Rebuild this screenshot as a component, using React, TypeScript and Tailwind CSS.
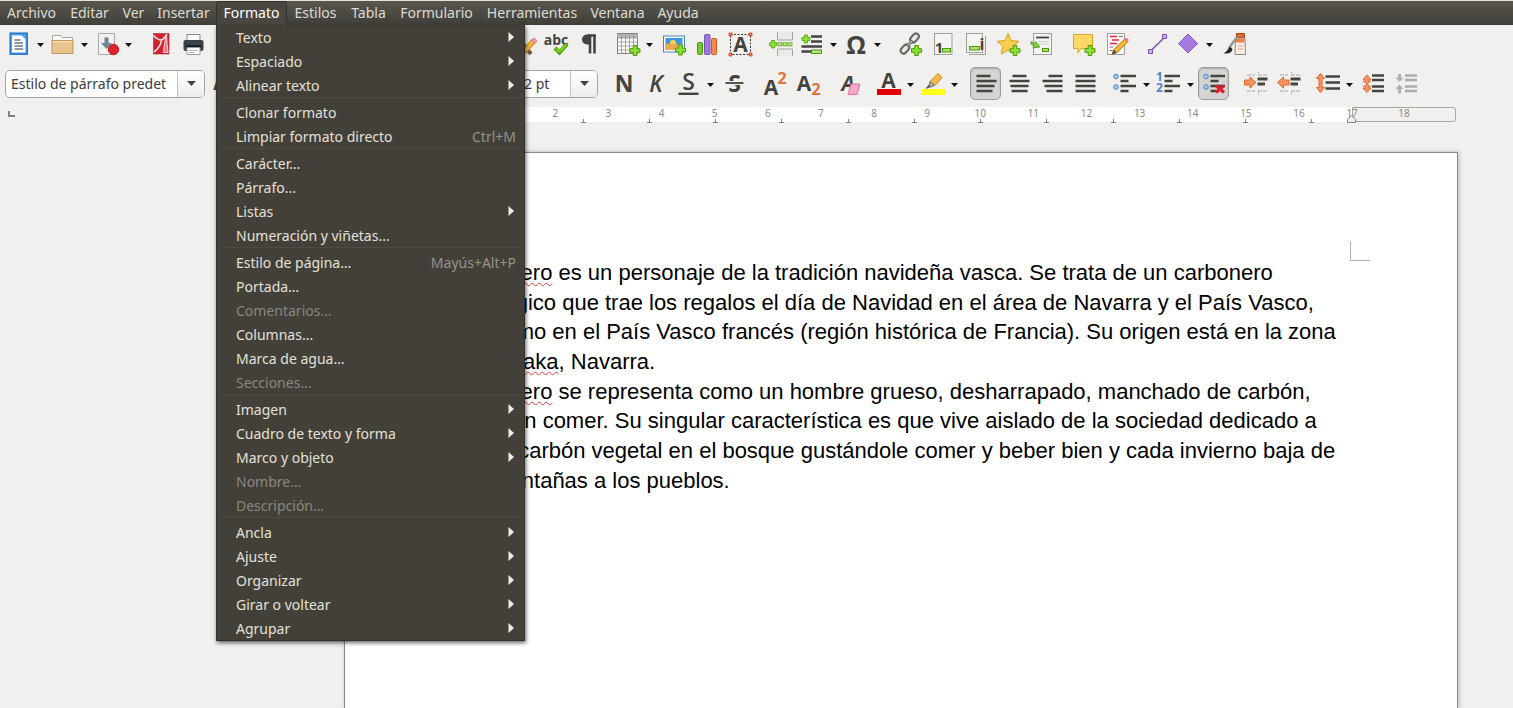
import type { ReactNode } from 'react';

const INK = '#45433f';
const GREEN = '#73d216';

const menus = [
  { label: 'Archivo', width: 'w-[63px]' },
  { label: 'Editar', width: 'w-[53px]' },
  { label: 'Ver', width: 'w-[35px]' },
  { label: 'Insertar', width: 'w-[65px]' },
  { label: 'Formato', width: 'w-[71px]', open: true },
  { label: 'Estilos', width: 'w-[57px]' },
  { label: 'Tabla', width: 'w-[49px]' },
  { label: 'Formulario', width: 'w-[87px]' },
  { label: 'Herramientas', width: 'w-[104px]' },
  { label: 'Ventana', width: 'w-[67px]' },
  { label: 'Ayuda', width: 'w-[54px]' },
];

type Item = { label: string; sub?: boolean; keys?: string; off?: boolean };

const formatMenu: Item[][] = [
  [
    { label: 'Texto', sub: true },
    { label: 'Espaciado', sub: true },
    { label: 'Alinear texto', sub: true },
  ],
  [{ label: 'Clonar formato' }, { label: 'Limpiar formato directo', keys: 'Ctrl+M' }],
  [
    { label: 'Carácter…' },
    { label: 'Párrafo...' },
    { label: 'Listas', sub: true },
    { label: 'Numeración y viñetas...' },
  ],
  [
    { label: 'Estilo de página…', keys: 'Mayús+Alt+P' },
    { label: 'Portada…' },
    { label: 'Comentarios…', off: true },
    { label: 'Columnas...' },
    { label: 'Marca de agua…' },
    { label: 'Secciones...', off: true },
  ],
  [
    { label: 'Imagen', sub: true },
    { label: 'Cuadro de texto y forma', sub: true },
    { label: 'Marco y objeto', sub: true },
    { label: 'Nombre…', off: true },
    { label: 'Descripción…', off: true },
  ],
  [
    { label: 'Ancla', sub: true },
    { label: 'Ajuste', sub: true },
    { label: 'Organizar', sub: true },
    { label: 'Girar o voltear', sub: true },
    { label: 'Agrupar', sub: true },
  ],
];

function Icon({ children }: { children: ReactNode }) {
  return (
    <svg viewBox="0 0 24 24" className="h-6 w-6 shrink-0 overflow-visible" fill="none" aria-hidden="true">
      {children}
    </svg>
  );
}

function Tool({ label, children }: { label: string; children: ReactNode }) {
  return (
    <button type="button" aria-label={label} className="flex h-8 w-[33px] shrink-0 items-center justify-center">
      <Icon>{children}</Icon>
    </button>
  );
}

function Pressed({ label, children }: { label: string; children: ReactNode }) {
  return (
    <button
      type="button"
      aria-label={label}
      aria-pressed="true"
      className="mr-0.5 flex h-[33px] w-[31px] shrink-0 items-center justify-center rounded-[5px] border border-[#a09d99] bg-[#d6d4d2] shadow-[inset_0_1px_2px_rgba(0,0,0,0.2)]"
    >
      <Icon>{children}</Icon>
    </button>
  );
}

function Split({ label, children }: { label: string; children: ReactNode }) {
  return (
    <div className="flex shrink-0 items-center">
      <button type="button" aria-label={label} className="flex h-8 w-[29px] items-center justify-center">
        <Icon>{children}</Icon>
      </button>
      <button type="button" aria-label={`${label}: opciones`} className="flex h-8 w-[15px] items-center justify-center">
        <svg viewBox="0 0 7 4" className="mt-0.5 h-1 w-[7px]" aria-hidden="true">
          <path d="M0 0h7L3.5 4z" fill="#111" />
        </svg>
      </button>
    </div>
  );
}

function Gap() {
  return <div className="w-2 shrink-0" />;
}

function Combo({ label, value, width }: { label: string; value: string; width: string }) {
  return (
    <div className={`flex h-7 shrink-0 overflow-hidden rounded-[5px] border border-[#a8a39d] bg-white ${width}`}>
      <input
        type="text"
        aria-label={label}
        defaultValue={value}
        className="w-0 flex-1 bg-transparent pl-[5px] text-[14px] text-[#3c3c3c] outline-none"
      />
      <button
        type="button"
        aria-label={`${label}: lista`}
        className="flex w-[27px] items-center justify-center border-l border-[#c4c0bb] bg-gradient-to-b from-white to-[#efedeb]"
      >
        <svg viewBox="0 0 9 5" className="h-[5px] w-[9px]" aria-hidden="true">
          <path d="M0 0h9L4.5 5z" fill={INK} />
        </svg>
      </button>
    </div>
  );
}

function Plus({ x, y }: { x: number; y: number }) {
  return (
    <path
      transform={`translate(${x} ${y})`}
      d="M-1.8-5h3.6v3.2H5v3.6H1.8V5h-3.6V1.8H-5v-3.6h3.2z"
      fill="#8ae234"
      stroke="#4e9a06"
      strokeWidth="1"
    />
  );
}

function Glyph({ x, y, size, children, fill = INK, weight = 700, italic = false }: {
  x: number; y: number; size: number; children: ReactNode; fill?: string; weight?: number; italic?: boolean;
}) {
  return (
    <text
      x={x}
      y={y}
      fontSize={size}
      fontWeight={weight}
      fontStyle={italic ? 'italic' : 'normal'}
      fill={fill}
      textAnchor="middle"
      fontFamily='"Open Sans", "Noto Sans", sans-serif'
    >
      {children}
    </text>
  );
}

function Lines({ d }: { d: string }) {
  return <path d={d} stroke={INK} strokeWidth="2.6" />;
}

function StandardBar() {
  return (
    <div className="flex h-[38px] items-center pl-1">
      <Split label="Nuevo">
        <rect x="3.2" y="1.2" width="17" height="21" fill="#4ba3ee" stroke="#1b6fc8" strokeWidth="1.4" />
        <path d="M5 3.5h9.500l4 3.500v13.500h-13.500z" fill="#fff" />
        <path d="M7.500 8h6M7.500 11h8.500M7.500 14h8.500M7.500 17h8.500" stroke="#6a7885" strokeWidth="1.300" />
      </Split>
      <Split label="Abrir">
        <path d="M1.500 9V3.500h8l2 2h10V9" fill="#fbfaf8" stroke="#a9a49c" />
        <rect x="1" y="8.500" width="21" height="13" fill="#e9c58c" stroke="#bd9a63" />
        <path d="M2 9.700h19" stroke="#f7e3c0" />
      </Split>
      <Split label="Guardar">
        <path d="M3.500 1.500h16v21h-16z" fill="#f1f1f0" stroke="#a8a8a6" />
        <path d="M9.500 5.500h4V11h3.500l-5.500 6-5.500-6h3.500z" fill="#6d8594" />
        <circle cx="18.500" cy="17.500" r="5.200" fill="#dc2430" stroke="#bd1622" />
      </Split>
      <Gap />
      <Tool label="Exportar a PDF">
        <rect x="4.500" y="1.500" width="15.500" height="20.500" fill="#cf2230" stroke="#b5202b" strokeWidth=".6" />
        <path d="M4.500 3.500c3 3.500 5.500 4.500 8 4.500 2.500-1 4-3.500 5.500-6M12.500 8c-.5 4.500-3.500 9-7.500 12" stroke="#f6d9da" strokeWidth="1.600" />
        <path d="M17.500 3c-1.500 4-2.500 11-3 17.500h4.500c-.8-6-1.200-12-1.500-17.500z" fill="#e27a80" stroke="#f6d9da" />
      </Tool>
      <Tool label="Imprimir">
        <path d="M5 9V2.500h13V9" fill="#fafafa" stroke="#888" />
        <rect x="1.500" y="8" width="20" height="11" rx="2" fill="#37424a" />
        <path d="M4 14.500h15" stroke="#10161a" strokeWidth="2" />
        <path d="M5 15.500h13v7H5z" fill="#fff" stroke="#999" />
        <path d="M7 18.500h9M7 20.500h6" stroke="#bbb" />
      </Tool>
      <div className="w-[296px] shrink-0" />
      <Tool label="Clonar formato">
        <path d="M6 5l14 17" stroke="#6a5746" strokeWidth="4" />
        <path d="M22.500 9L13 20" stroke="#c98a14" strokeWidth="5.500" />
        <path d="M22.500 9L13 20" stroke="#f5b83b" strokeWidth="3.500" />
        <path d="M20 8l4 3.500 1.500-2c.5-1.500-1.500-3.500-3-3z" fill="#f19ab0" stroke="#c8607b" strokeWidth=".7" />
      </Tool>
      <Tool label="Ortografía">
        <Glyph x={12} y={13} size={14}>abc</Glyph>
        <path d="M11 16l4.500 4.500 7.500-8.500" stroke="#4e9a06" strokeWidth="4" />
        <path d="M11.800 16.800l3.700 3 6.800-7.200" stroke={GREEN} strokeWidth="2.300" />
      </Tool>
      <Tool label="Marcas de formato">
        <path d="M11 3.500h8M13 4v17.500M17.500 4v17.500" stroke={INK} strokeWidth="2.600" />
        <path d="M13 2.500h-3a4.800 4.800 0 0 0 0 10h3z" fill={INK} />
      </Tool>
      <Gap />
      <Split label="Tabla">
        <rect x="1.500" y="1.500" width="20" height="20" fill="#fff" stroke="#81807c" />
        <path d="M1.500 2h20v4h-20z" fill="#b7b6b2" />
        <path d="M1.500 6h20M1.500 10h20M1.500 14h20M1.500 18h20M5.500 1.500v20M9.500 1.500v20M13.500 1.500v20M17.500 1.500v20" stroke="#9a9995" strokeWidth=".9" />
        <Plus x={19} y={18.500} />
      </Split>
      <Tool label="Imagen">
        <rect x="1.500" y="4" width="21" height="16" fill="#fff" stroke="#4982b7" />
        <rect x="3.500" y="6" width="17" height="12" fill="#3c97df" />
        <circle cx="11" cy="11" r="3" fill="#ffd84a" />
        <path d="M3.500 12.500c5-3 9 2 17-1V18h-17z" fill="#eda94f" />
        <Plus x={18.500} y={18} />
      </Tool>
      <Tool label="Gráfico">
        <rect x="2.500" y="10.500" width="5" height="12" rx="1" fill="#73c92f" stroke="#4b9410" />
        <rect x="9.500" y="2.500" width="5.500" height="20" rx="1" fill="#a278dc" stroke="#7950b5" />
        <rect x="16.500" y="6.500" width="5" height="16" rx="1" fill="#f4894d" stroke="#cf5b1e" />
      </Tool>
      <Tool label="Cuadro de texto">
        <rect x="2.500" y="2.500" width="20" height="20" stroke="#383838" strokeDasharray="2 1.500" />
        <Glyph x={12.500} y={20} size={21}>A</Glyph>
        <path d="M1 1h3v3H1zM21 1h3v3h-3zM1 21h3v3H1zM21 21h3v3h-3z" fill="#ee7b54" stroke="#c9481e" strokeWidth=".8" />
      </Tool>
      <Gap />
      <Tool label="Salto de página">
        <path d="M8.500 0v8h15V0M8.500 24v-7h15v7" fill="#eceae8" stroke="#a5a4a1" />
        <path d="M.5 10.800h2V8.500h3v2.300h2v3h-2V16h-3v-2.200h-2z" fill="#8ae234" stroke="#4e9a06" strokeWidth=".8" />
        <path d="M9 10.800h4v3H9zM14 10.800h4v3h-4zM19 10.800h4v3h-4z" fill="#c6f09c" stroke="#4e9a06" strokeWidth=".8" />
      </Tool>
      <Split label="Campo">
        <Lines d="M11 4.500h11M11 9.500h11M1.500 14.500H22M1.500 19.500h10" />
        <path d="M2 5.500h2.500V3h3v2.500H10v3H7.500V11h-3V8.500H2z" fill="#8ae234" stroke="#4e9a06" strokeWidth=".8" />
        <rect x="11.500" y="18" width="10" height="3.500" fill="#b4e87e" stroke="#4e9a06" />
      </Split>
      <Split label="Carácter especial">
        <Glyph x={12} y={21.500} size={25}>Ω</Glyph>
      </Split>
      <Gap />
      <Tool label="Hiperenlace">
        <g stroke="#696863" fill="#e5e4e1">
          <rect x="-5" y="-3" width="10" height="6" rx="3" transform="translate(16.500 6) rotate(-48)" fillOpacity=".3" strokeWidth="2" />
          <rect x="-5" y="-3" width="10" height="6" rx="3" transform="translate(7 17) rotate(-48)" fillOpacity=".3" strokeWidth="2" />
          <path d="M9 14.500l5.500-6" strokeWidth="3" />
          <path d="M9.500 14l4.500-5" stroke="#dddbd8" strokeWidth="1" />
        </g>
        <Plus x={18.500} y={18.500} />
      </Tool>
      <Tool label="Nota al pie">
        <rect x="3.500" y="1.500" width="17.500" height="21" fill="#f4f4f3" stroke="#a09f9c" />
        <Glyph x={8} y={21} size={15}>1</Glyph>
        <rect x="11.500" y="16.500" width="8" height="3.500" fill="#a7e36c" stroke="#4e9a06" />
      </Tool>
      <Tool label="Nota al final">
        <rect x="2.500" y="1.500" width="16" height="19" fill="#f4f4f3" stroke="#a09f9c" />
        <path d="M5 22.500h16.500V4" stroke="#a09f9c" />
        <Glyph x={18} y={18} size={16}>i</Glyph>
        <rect x="5.500" y="14.500" width="10" height="3.500" fill="#a7e36c" stroke="#4e9a06" />
      </Tool>
      <Tool label="Marcador">
        <path d="M11 1.500l3 7 8 .8-6 5 1.700 7.700-6.700-4-6.800 4 1.800-7.700-6-5 8-.8z" fill="#fbce50" stroke="#dda01c" />
        <Plus x={18} y={18.500} />
      </Tool>
      <Tool label="Referencia cruzada">
        <rect x="3.500" y="1.500" width="18" height="21" fill="#f4f4f3" stroke="#a09f9c" />
        <path d="M6 5.500h13" stroke={INK} strokeWidth="1.800" />
        <path d="M8 9.500h11M8 12h11" stroke="#c2c2c0" strokeWidth=".8" />
        <path d="M1 9.500l3.500 2 1-2 4.500 5.500-7 1 1-2-3-2z" fill="#7ac943" stroke="#4e9a06" strokeWidth=".8" />
        <rect x="12.500" y="16.500" width="6" height="3" fill="#a7e36c" stroke="#4e9a06" />
      </Tool>
      <Gap />
      <Tool label="Comentario">
        <path d="M2.500 2.500h19v14H10l-3 4.500v-4.500H2.500z" fill="#fcd865" stroke="#d8a82b" />
        <Plus x={19} y={18.500} />
      </Tool>
      <Tool label="Control de cambios">
        <path d="M3.500 1.500h17v21h-17z" fill="#fafafa" stroke="#a09f9c" />
        <path d="M6 4.500h7M8 8h7M6 11.500h7" stroke="#d92b3a" strokeWidth="1.500" />
        <path d="M15 4.500h4M5.500 15h4M5.500 18.500h3" stroke="#777" />
        <path d="M22 8.500l-11 11" stroke="#b87a10" strokeWidth="5" />
        <path d="M22 8.500l-11 11" stroke="#fbb936" strokeWidth="3.200" />
        <path d="M9.500 17.500l3.500 3.500-5.500 1.800z" fill="#594528" />
        <path d="M20 7l3.500 3.500 1-2c0-2-1.500-2.500-3-2.500z" fill="#f0708c" />
      </Tool>
      <Gap />
      <Tool label="Línea">
        <path d="M5 19.500L20 5" stroke="#74509f" strokeWidth="1.500" />
        <path d="M3.500 17.500h4v4h-4zM17.500 2.500h4v4h-4z" fill="#cdb2ed" stroke="#7950b5" />
      </Tool>
      <Split label="Formas">
        <path d="M12 2l9.500 9.500-9.500 9.500L2.500 11.500z" fill="#a47be0" stroke="#8359c2" />
      </Split>
      <Tool label="Funciones de dibujo">
        <path d="M14.500 1.500h8v4h-8z" fill="#d96d2e" stroke="#a34714" />
        <path d="M13.500 6h9.500l.5 16.500h-10.500z" fill="#f6efe8" stroke="#8d8a85" />
        <path d="M14 6.500h8.500v4H14z" fill="#ec8142" />
        <path d="M16 14h5M16 17h5" stroke="#e9a57e" />
        <path d="M15 5L7 16" stroke="#9a9791" strokeWidth="2.500" />
        <path d="M8.500 15c-2.500 0-3 5-7 6 4 1.500 8.500 0 9-4z" fill="#2b2a28" />
      </Tool>
    </div>
  );
}

function FormattingBar() {
  return (
    <div className="flex h-[41px] items-center pl-[5px]">
      <Combo label="Estilo de párrafo" value="Estilo de párrafo predet" width="w-[200px]" />
      <Tool label="Actualizar estilo">
        <Glyph x={9} y={18} size={17}>A</Glyph>
      </Tool>
      <div className="w-[272px] shrink-0" />
      <Combo label="Tamaño de letra" value="12 pt" width="w-[88px]" />
      <div className="w-2.5 shrink-0" />
      <Tool label="Negrita">
        <Glyph x={11} y={20} size={23}>N</Glyph>
      </Tool>
      <Tool label="Cursiva">
        <Glyph x={10} y={20} size={23} weight={600} italic>K</Glyph>
      </Tool>
      <Split label="Subrayado">
        <Glyph x={11.500} y={17.500} size={23} weight={600}>S</Glyph>
        <path d="M1.500 21.800h20" stroke={INK} strokeWidth="2.400" />
      </Split>
      <Tool label="Tachado">
        <Glyph x={11.500} y={20} size={23}>S</Glyph>
        <path d="M2 11h18" stroke="#f2f0ee" strokeWidth="4" />
        <path d="M2.500 11h18" stroke={INK} strokeWidth="1.800" />
      </Tool>
      <Gap />
      <Tool label="Superíndice">
        <Glyph x={7} y={23} size={21}>A</Glyph>
        <Glyph x={18} y={11.500} size={16} fill="#e5703c">2</Glyph>
      </Tool>
      <Tool label="Subíndice">
        <Glyph x={7} y={19} size={21}>A</Glyph>
        <Glyph x={19} y={23} size={16} fill="#e5703c">2</Glyph>
      </Tool>
      <Gap />
      <Tool label="Limpiar formato">
        <Glyph x={10} y={18.500} size={21} italic>A</Glyph>
        <path d="M13 12h9l-3 10.500h-9z" fill="#f5a9ca" stroke="#d873a2" />
      </Tool>
      <Gap />
      <Split label="Color de letra">
        <Glyph x={11.500} y={16} size={21}>A</Glyph>
        <path d="M0 17h24v6H0z" fill="#e00000" />
      </Split>
      <Split label="Color de resalte">
        <path d="M0 17h24v6H0z" fill="#ffff1a" />
        <path d="M17 1.500l4 4-7 8-5-4z" fill="#fcb647" stroke="#c98417" />
        <path d="M9 9.500l4.500 4-3 1.500-2.500-2z" fill="#aaa" stroke="#666" strokeWidth=".8" />
        <path d="M7.500 13l2.500 2-3.500 1.500H4.500z" fill="#55534f" />
      </Split>
      <Gap />
      <Pressed label="Alinear a la izquierda">
        <Lines d="M2.500 4h14M2.500 9h20M2.500 14h18M2.500 19h16" />
      </Pressed>
      <Tool label="Centrar">
        <Lines d="M4.500 4h14M1.500 9h20M2.500 14h18M3.500 19h16" />
      </Tool>
      <Tool label="Alinear a la derecha">
        <Lines d="M7.500 4h14M1.500 9h20M3.500 14h18M5.500 19h16" />
      </Tool>
      <Tool label="Justificar">
        <Lines d="M1.500 4h20M1.500 9h20M1.500 14h20M1.500 19h20" />
      </Tool>
      <Gap />
      <Split label="Viñetas">
        <circle cx="3" cy="4.500" r="2.300" fill="#a5c9f0" stroke="#4a86c8" />
        <circle cx="3" cy="15" r="2.300" fill="#a5c9f0" stroke="#4a86c8" />
        <Lines d="M7.500 4H23M7.500 9h8M7.500 14H23M7.500 19h8" />
      </Split>
      <Split label="Numeración">
        <Glyph x={2.500} y={8.500} size={12} fill="#4a86c8">1</Glyph>
        <Glyph x={2.500} y={20} size={12} fill="#4a86c8">2</Glyph>
        <Lines d="M7.500 4H23M7.500 9h8M7.500 14H23M7.500 19h8" />
      </Split>
      <Pressed label="Sin lista">
        <circle cx="4" cy="4.500" r="2.300" fill="#a5c9f0" stroke="#4a86c8" />
        <circle cx="4" cy="15" r="2.300" fill="#a5c9f0" stroke="#4a86c8" />
        <Lines d="M8.500 4H23M8.500 9h8M8.500 14H23M8.500 19h6" />
        <path d="M14 13.500l8 7M22 13.500l-8 7" stroke="#dd1f2b" strokeWidth="3.200" />
      </Pressed>
      <Gap />
      <Tool label="Aumentar sangría">
        <path d="M3 3h8M14 3h9M3 19h8M14 19h9" stroke="#aaa8a5" strokeDasharray="4 1" />
        <path d="M14.500 0v3M14.500 20v3" stroke="#aaa8a5" strokeDasharray="1 1" />
        <path d="M.5 8h5.500V5l6 5.500-6 5.500v-3H.5z" fill="#f79463" stroke="#dd6428" />
        <path d="M13.500 7h10M13.500 12h7.500" stroke={INK} strokeWidth="3" />
      </Tool>
      <Tool label="Disminuir sangría">
        <path d="M3 3h8M14 3h9M3 19h8M14 19h9" stroke="#aaa8a5" strokeDasharray="4 1" />
        <path d="M14.500 0v3M14.500 20v3" stroke="#aaa8a5" strokeDasharray="1 1" />
        <path d="M12 8H6.500V5L.5 10.500l6 5.500v-3H12z" fill="#f79463" stroke="#dd6428" />
        <path d="M13.500 7h10M13.500 12h7.500" stroke={INK} strokeWidth="3" />
      </Tool>
      <Gap />
      <Split label="Interlineado">
        <path d="M4.500 1.500l4 5H6v9h2.500l-4 5-4-5H3v-9H.5z" fill="#f79463" stroke="#dd6428" />
        <Lines d="M9.500 4.500H24M9.500 10.500H24M9.500 16.500H24" />
      </Split>
      <Tool label="Aumentar espacio entre párrafos">
        <path d="M5 3l4 4.500H6.500v1.500H9L5 12 1 9h2.500V7.500H1zM5 12l4 3H6.500v1.500H9L5 20.500l-4-4h2.500V15H1z" fill="#f79463" stroke="#dd6428" strokeWidth=".8" />
        <Lines d="M10 3.500h12M10 8h12M10 14.500h12M10 19h12" />
      </Tool>
      <Tool label="Disminuir espacio entre párrafos">
        <path d="M3 2h3v3.500h2.500L4.500 10 .5 5.500H3zM3 21.500h3V17h2.500l-4-4.500L.5 17H3z" fill="#b3b1ae" />
        <path d="M10 3.500h12M10 8h12M10 14.500h12M10 19h12" stroke="#aeaca9" strokeWidth="2.600" />
      </Tool>
    </div>
  );
}

function Ruler() {
  const cm = Array.from({ length: 17 }, (_, i) => i + 1);
  const tabs = Array.from({ length: 13 }, (_, i) => Math.round((i + 1) * 66.25) + 1);
  return (
    <div className="flex h-[18px]">
      <div className="flex w-[345px] shrink-0 items-center pl-2">
        <svg viewBox="0 0 7 6" className="mb-1 h-1.5 w-[7px]" fill="none" aria-hidden="true">
          <path d="M1 0v5h6" stroke="#85827e" strokeWidth="2" />
        </svg>
      </div>
      <div className="flex h-[15px] w-[1111px] shrink-0 text-[10px] leading-[13px] text-[#8b8986]">
        <div className="w-[104px] rounded-l-[3px] border border-[#aaa7a3]" />
        <div className="relative flex w-[903px] bg-white">
          {cm.map((n) => (
            <div key={n} className="flex-1 text-right">
              <span className="inline-block w-5 translate-x-1/2 text-center">{n}</span>
            </div>
          ))}
          <svg viewBox="0 0 902 18" className="absolute top-0 left-0 h-[18px] w-[902px] overflow-visible" fill="none" aria-hidden="true">
            {tabs.map((x) => (
              <path key={x} d={`M${x - 2} 15.500h5M${x + 0.5} 12v3`} stroke="#85827e" />
            ))}
            <path d="M898.500 15.500v-3l4-4 4 4v3z" fill="#f2f0ee" stroke="#85827e" />
          </svg>
        </div>
        <div className="flex w-[104px] rounded-r-[3px] border border-[#aaa7a3] leading-[11px]">
          <span className="w-[102px] text-center">18</span>
        </div>
      </div>
    </div>
  );
}

function Typo({ children }: { children: ReactNode }) {
  return (
    <span className="underline decoration-[#e03c3c] decoration-wavy decoration-1 underline-offset-2">{children}</span>
  );
}

function FormatMenu() {
  return (
    <ul
      role="menu"
      className="absolute top-full left-0 z-10 w-[309px] border border-t-0 border-[#33312e] bg-[#43403a] font-normal shadow-[1px_2px_4px_rgba(0,0,0,0.6)]"
    >
      {formatMenu.map((group, g) => (
        <li key={g} role="none">
          {g > 0 && <div role="separator" className="mx-1 h-[3px] border-t border-[#4e4b46]" />}
          <ul role="none">
            {group.map((item) => (
              <li key={item.label} role="none">
                <button
                  type="button"
                  role="menuitem"
                  disabled={item.off}
                  className="flex h-6 w-full items-center justify-between pr-2 pl-[19px] text-[14px] text-[#e4e0d9] disabled:text-[#8a867f]"
                >
                  <span>{item.label}</span>
                  {item.keys && <span className="text-[#96928a]">{item.keys}</span>}
                  {item.sub && (
                    <svg viewBox="0 0 6 10" className="mr-0.5 h-2.5 w-1.5" aria-hidden="true">
                      <path d="M0.500 0v10L6 5z" fill="#efece6" />
                    </svg>
                  )}
                </button>
              </li>
            ))}
          </ul>
        </li>
      ))}
    </ul>
  );
}

export default function App() {
  return (
    <div className="flex h-screen flex-col overflow-hidden bg-[#f2f0ee] font-['Noto_Sans','Open_Sans',sans-serif]">
      <nav className="flex h-[25px] shrink-0 border-t border-[#e4e2de] bg-gradient-to-b from-[#5a574f] to-[#403e39] text-[14px] text-[#dfdbd2]">
        {menus.map((m) => (
          <div key={m.label} className={`relative shrink-0 ${m.width}`}>
            <button
              type="button"
              aria-haspopup="menu"
              className={`h-6 w-full pb-0.5 text-center ${m.open ? 'rounded-t-[3px] border border-b-0 border-[#35332f] bg-[#4a4741] text-white' : ''}`}
            >
              {m.label}
            </button>
            {m.open && <FormatMenu />}
          </div>
        ))}
      </nav>

      <StandardBar />
      <FormattingBar />

      <div className="mt-[3px]">
        <Ruler />
      </div>

      {/* Page */}
      <main className="flex flex-1 pt-[27px] pl-[344px]">
        <article className="w-[1114px] shrink-0 border border-b-0 border-[#8d8a86] bg-white shadow-[1px_0_4px_rgba(0,0,0,0.25)]">
          <div className="flex h-[105px] items-start justify-end pt-[88px] pr-[87px]">
            <div className="h-5 w-5 shrink-0 border-b border-l border-[#b0b0b0]" />
          </div>
          <div className="pl-[112px] font-['Liberation_Sans',sans-serif] text-[22px] leading-[1.35] whitespace-nowrap text-black">
            <p>
              <Typo>Olentzero</Typo> es un personaje de la tradición navideña vasca. Se trata de un carbonero
              <br />
              mitológico que trae los regalos el día de Navidad en el área de Navarra y el País Vasco,
              <br />
              así como en el País Vasco francés (región histórica de Francia). Su origen está en la zona
              <br />
              de <Typo>Lesaka</Typo>, Navarra.
            </p>
            <p>
              <Typo>Olentzero</Typo> se representa como un hombre grueso, desharrapado, manchado de carbón,
              <br />
              de buen comer. Su singular característica es que vive aislado de la sociedad dedicado a
              <br />
              hacer carbón vegetal en el bosque gustándole comer y beber bien y cada invierno baja de
              <br />
              las montañas a los pueblos.
            </p>
          </div>
        </article>
      </main>
    </div>
  );
}
